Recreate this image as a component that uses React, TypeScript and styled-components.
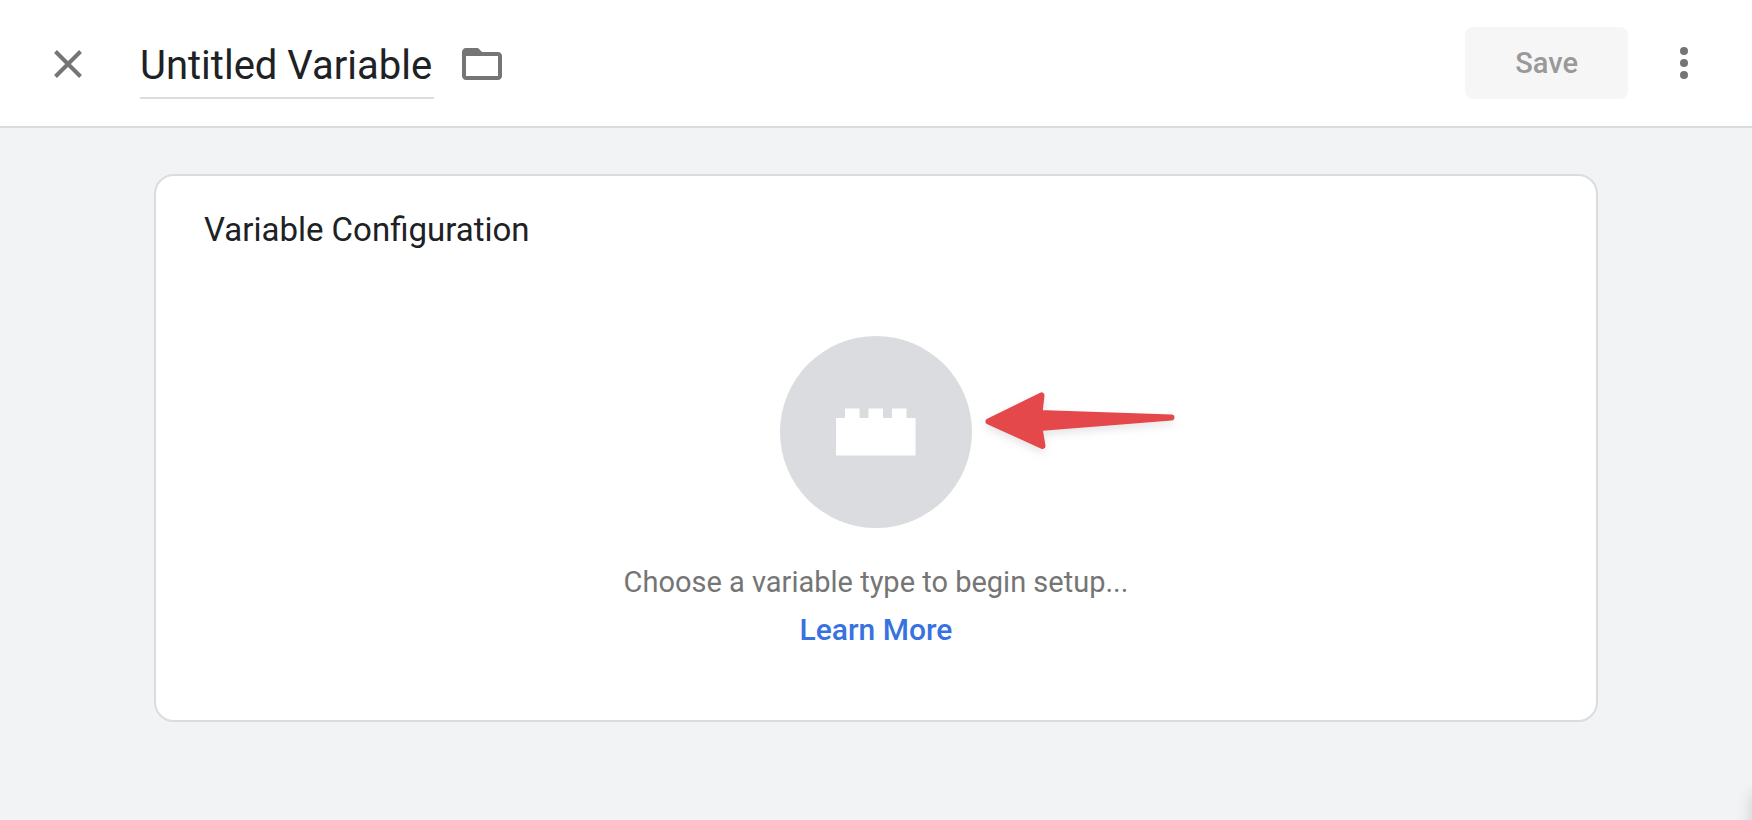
import React from "react";
import styled, { createGlobalStyle } from "styled-components";

const display = `"Google Sans", Roboto, "Liberation Sans", sans-serif`;

const GlobalStyle = createGlobalStyle`
  *, *::before, *::after { box-sizing: border-box; }
  body {
    margin: 0;
    background: #f1f3f4;
    color: #202124;
    font-family: Roboto, "Liberation Sans", sans-serif;
    overflow-x: hidden;
  }
`;

const Header = styled.header`
  display: flex;
  align-items: center;
  min-height: 128px;
  padding: 2px 44px 0;
  background: #fff;
  border-bottom: 2px solid #dadce0;
`;

const IconButton = styled.button`
  display: flex;
  align-items: center;
  justify-content: center;
  width: 48px;
  height: 48px;
  padding: 0;
  border: 0;
  background: none;
  color: #757575;
  cursor: pointer;
`;

const TitleInput = styled.input`
  width: 294px;
  height: 70px;
  margin: 0 24px 0 48px;
  padding: 4px 0 0;
  border: 0;
  border-bottom: 2px solid #dadce0;
  outline: 0;
  background: none;
  color: #202124;
  font: 400 40px ${display};
`;

const Actions = styled.div`
  display: flex;
  align-items: center;
  gap: 32px;
  margin-left: auto;
  padding-bottom: 2px;
`;

const SaveButton = styled.button`
  height: 72px;
  padding: 0 50px;
  border: 0;
  border-radius: 8px;
  background: #f6f6f6;
  color: #999;
  font: 500 29px ${display};
`;

const Main = styled.main`
  padding: 46px 154px;
`;

const Card = styled.section`
  padding: 32px 48px 66px;
  background: #fff;
  border: 2px solid #dadce0;
  border-radius: 20px;
`;

const CardTitle = styled.h2`
  margin: 0;
  font: 400 33px/44px ${display};
`;

const Setup = styled.div`
  display: flex;
  flex-direction: column;
  align-items: center;
  padding-top: 84px;
`;

const Picker = styled.div`
  position: relative;
`;

const TypeButton = styled.button`
  display: flex;
  align-items: center;
  justify-content: center;
  width: 192px;
  height: 192px;
  padding: 0;
  border: 0;
  border-radius: 50%;
  background: #dadce0;
  color: #fff;
  cursor: pointer;
`;

const Pointer = styled.svg`
  position: absolute;
  top: 48px;
  left: 200px;
  overflow: visible;
  filter: drop-shadow(0 4px 4px rgba(0, 0, 0, 0.1));
  pointer-events: none;
`;

const Hint = styled.p`
  margin: 30px 0 0;
  color: #757575;
  font-size: 29px;
  line-height: 48px;
`;

const LearnLink = styled.a`
  color: #3871e0;
  font: 500 30px/48px ${display};
  text-decoration: none;
`;

const DrawerEdge = styled.div`
  position: fixed;
  left: 100%;
  bottom: -60px;
  width: 80px;
  height: 88px;
  border-radius: 8px;
  box-shadow: 0 0 16px rgba(0, 0, 0, 0.16);
`;

export default function App() {
  return (
    <>
      <GlobalStyle />
      <Header>
        <IconButton type="button" aria-label="Close">
          <svg width="28" height="28" viewBox="0 0 28 28" stroke="currentColor" strokeWidth="4">
            <path d="M1.5 1.5l25 25M26.5 1.5l-25 25" />
          </svg>
        </IconButton>
        <TitleInput aria-label="Variable name" defaultValue="Untitled Variable" />
        <IconButton type="button" aria-label="Choose folder">
          <svg width="40" height="32" viewBox="0 0 20 16" fill="currentColor">
            <path d="M18 2H10L8 0H2C.9 0 0 .9 0 2v12c0 1.1.9 2 2 2h16c1.1 0 2-.9 2-2V4c0-1.1-.9-2-2-2zm0 12H2V4h16z" />
          </svg>
        </IconButton>
        <Actions>
          <SaveButton type="button" disabled>Save</SaveButton>
          <IconButton type="button" aria-label="More actions">
            <svg width="8" height="32" viewBox="0 0 8 32" fill="currentColor">
              <circle cx="4" cy="4" r="4" />
              <circle cx="4" cy="16" r="4" />
              <circle cx="4" cy="28" r="4" />
            </svg>
          </IconButton>
        </Actions>
      </Header>
      <Main>
        <Card>
          <CardTitle>Variable Configuration</CardTitle>
          <Setup>
            <Picker>
              <TypeButton type="button" aria-label="Choose a variable type">
                <svg width="80" height="48" viewBox="0 0 80 48" fill="currentColor">
                  <path d="M0 10h9V0.5h14.5V10h9V0.5H47V10h9V0.5h14.5V10H79.5V47.5H0z" />
                </svg>
              </TypeButton>
              <Pointer width="196" height="66" viewBox="0 0 196 66" aria-hidden="true">
                <path
                  d="M8.5 37.500L61.500 11.500L59.500 29L191.500 33.500L59.500 44L62.500 62Z"
                  fill="#e5484b"
                  stroke="#e5484b"
                  strokeWidth="6"
                  strokeLinejoin="round"
                />
              </Pointer>
            </Picker>
            <Hint>Choose a variable type to begin setup...</Hint>
            <LearnLink href="#learn-more">Learn More</LearnLink>
          </Setup>
        </Card>
      </Main>
      <DrawerEdge />
    </>
  );
}
